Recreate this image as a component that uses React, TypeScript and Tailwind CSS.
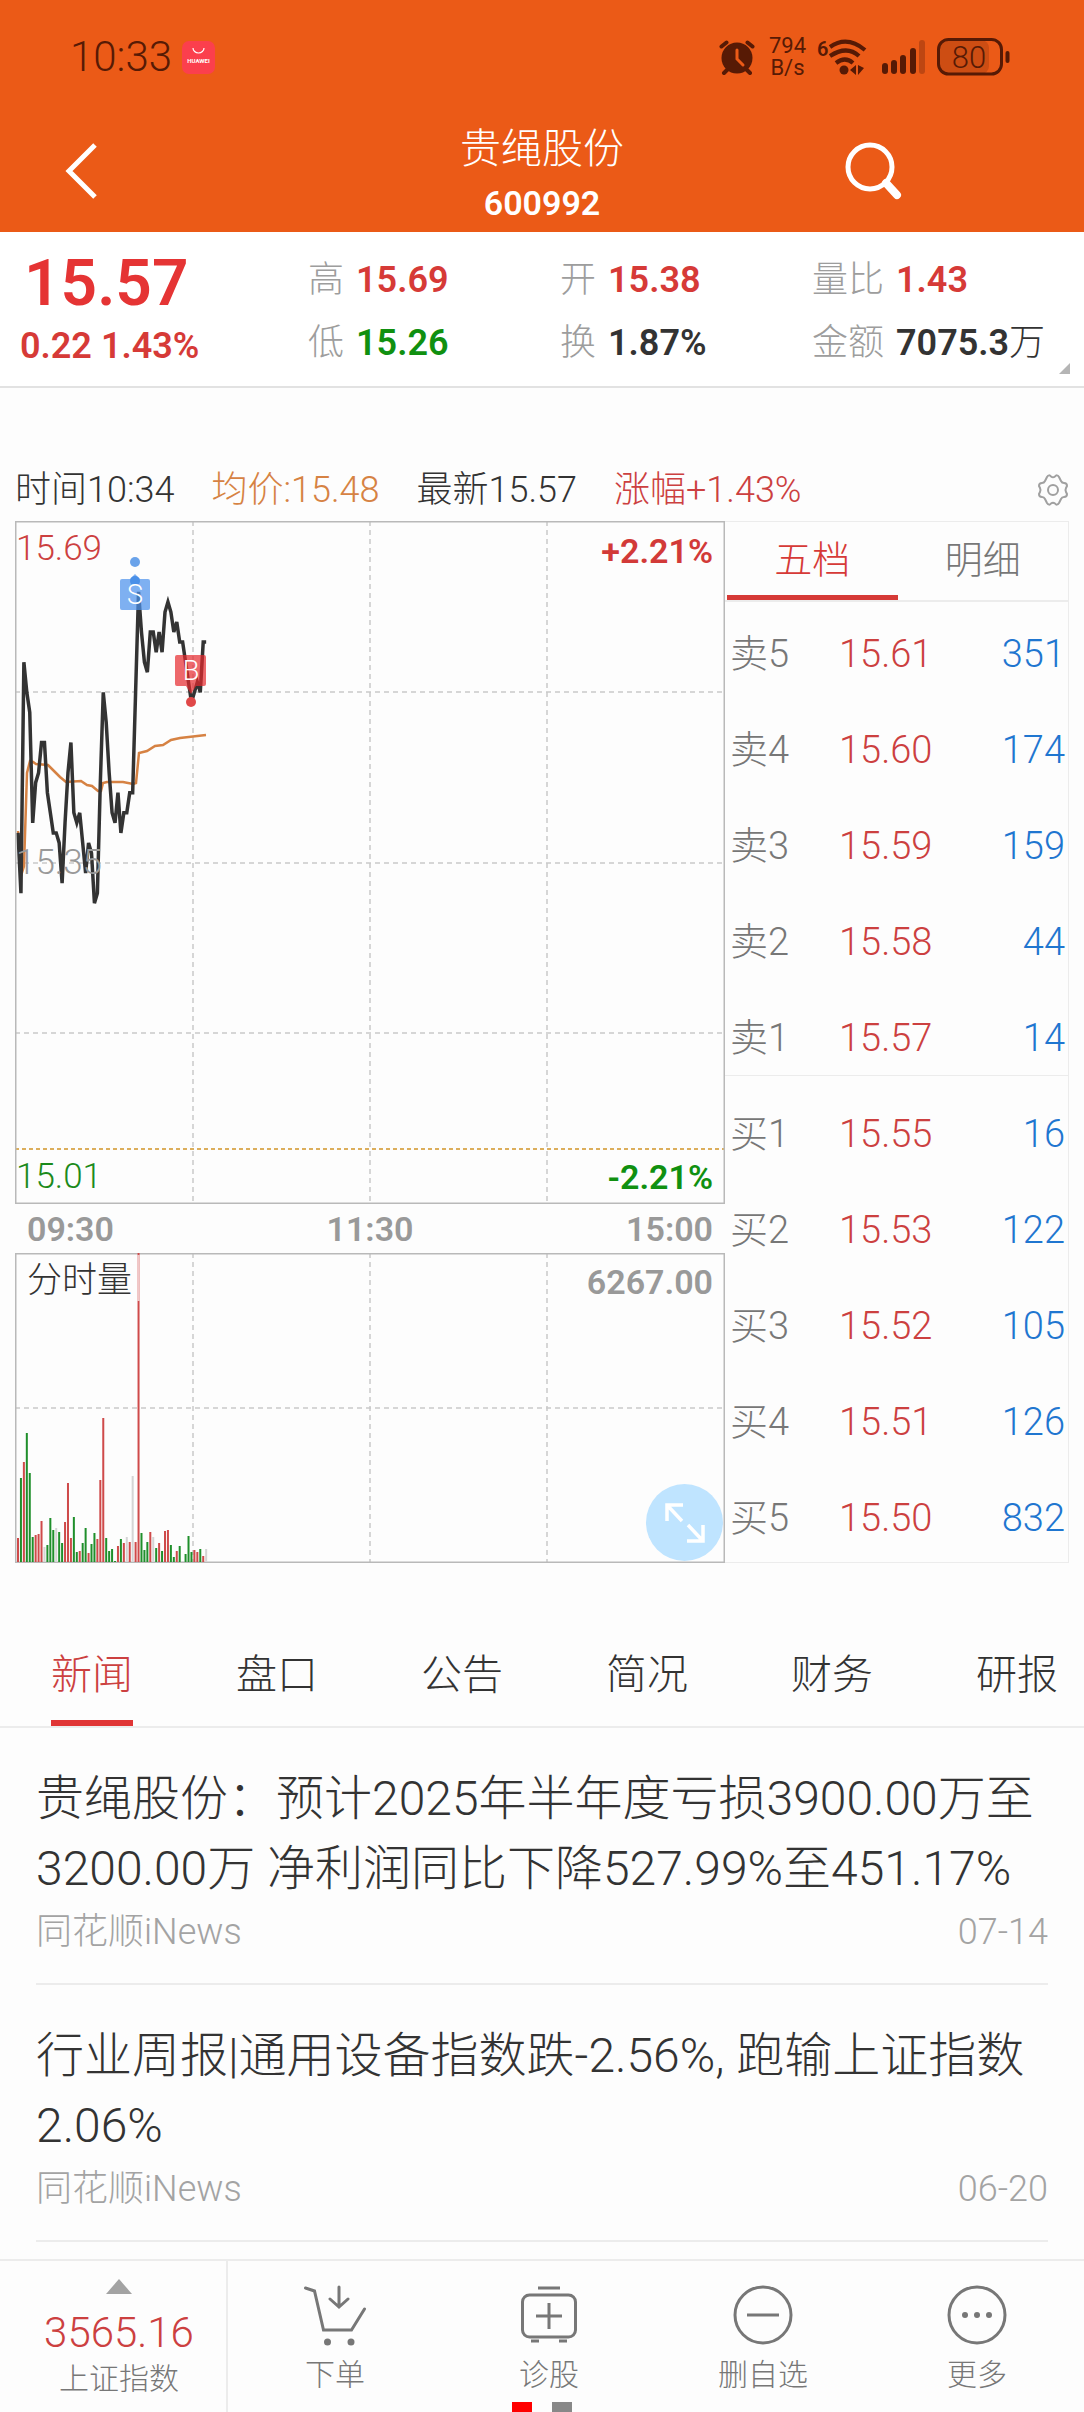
import { useState } from "react";

type Level = { name: string; price: string; volume: number };

const sellLevels: Level[] = [
  { name: "卖5", price: "15.61", volume: 351 },
  { name: "卖4", price: "15.60", volume: 174 },
  { name: "卖3", price: "15.59", volume: 159 },
  { name: "卖2", price: "15.58", volume: 44 },
  { name: "卖1", price: "15.57", volume: 14 },
];

const buyLevels: Level[] = [
  { name: "买1", price: "15.55", volume: 16 },
  { name: "买2", price: "15.53", volume: 122 },
  { name: "买3", price: "15.52", volume: 105 },
  { name: "买4", price: "15.51", volume: 126 },
  { name: "买5", price: "15.50", volume: 832 },
];

const newsTabs = ["新闻", "盘口", "公告", "简况", "财务", "研报"];

const news = [
  {
    title: "贵绳股份：预计2025年半年度亏损3900.00万至3200.00万 净利润同比下降527.99%至451.17%",
    source: "同花顺iNews",
    date: "07-14",
  },
  {
    title: "行业周报|通用设备指数跌-2.56%, 跑输上证指数2.06%",
    source: "同花顺iNews",
    date: "06-20",
  },
];

// One entry per minute from 09:30, in cents above 15.00
const prices = [
  38, 32, 55, 52, 50, 39, 43, 44, 47, 47, 42, 40, 38, 38, 37, 33, 39, 44, 47, 40, 39, 40, 37, 34, 37, 36,
  31, 32, 43, 52, 49, 44, 40, 39, 42, 38, 40, 40, 42, 42, 52, 62, 58, 55, 54, 58, 58, 56, 58, 56, 60, 61,
  60, 58, 59, 57, 57, 55, 53, 51, 52, 53, 52, 57, 57,
];

// r = up, g = down, n = unchanged
const volumes =
  "24r 84g 100r 129g 89g 25g 27r 28r 41r 15n 17g 44g 32g 34n 30g 19g 40r 79r 24r 45g 10g 11r 19g 34g 9r 18g 29g 23r 82r 144r 24g 11g 13g 1g 16r 23g 19r 25n 20r 86n 20r 309r 29g 12g 20g 30r 25n 14g 19r 11g 31r 32r 17g 5g 11r 16g 1n 8g 26g 10g 12r 10r 13g 6r 13n".split(
    " "
  );

const barColors: Record<string, string> = { r: "#cf4a4a", g: "#1f8f2b", n: "#d4d4d4" };

const minuteX = (i: number) => 3 + i * 2.94;
const priceY = (cents: number) => 342 - (cents - 35) * 10.04;

function StatusBar() {
  return (
    <div className="flex h-[114px] items-center justify-between pl-[70px] pr-[73px] text-[#571a05]">
      <div className="flex items-center gap-2.5">
        <span className="text-[42px] leading-none">10:33</span>
        <svg width="33" height="33" viewBox="0 0 33 33" aria-hidden="true">
          <rect width="33" height="33" rx="7" fill="#fb3f4d" />
          <path d="M11 7a5.500 5 0 0 0 11 0" fill="none" stroke="#fff" strokeWidth="1.200" />
          <text x="16.500" y="22" fill="#fff" fontSize="6" fontWeight="700" textAnchor="middle">
            HUAWEI
          </text>
        </svg>
      </div>
      <div className="flex items-center">
        <svg width="36" height="35" viewBox="0 0 36 35" fill="none" stroke="currentColor" strokeLinecap="round" aria-hidden="true">
          <path d="M2.500 6.500l5-4M33.500 6.500l-5-4M9 29l-4 4M27 29l4 4" strokeWidth="4" />
          <circle cx="18" cy="18" r="15.500" fill="currentColor" stroke="none" />
          <path d="M18 10v9l6 6" stroke="#eb5a17" strokeWidth="3" />
        </svg>
        <div className="ml-3.5 text-center text-[22px] font-normal leading-[22px]">
          <div>794</div>
          <div>B/s</div>
        </div>
        <svg className="ml-2.5" width="52" height="38" viewBox="0 0 52 38" fill="none" stroke="currentColor" aria-hidden="true">
          <text x="1" y="18" fill="currentColor" stroke="none" fontSize="20" fontWeight="600">
            6
          </text>
          <path d="M14 9Q31-3 49 12M14 18q17-11 29 0M20 25q9-7 17 0" strokeWidth="4.200" />
          <circle cx="28" cy="32" r="4.500" fill="currentColor" stroke="none" />
          <path d="M40 27v10l-6-5zM42 27v10l6-7z" fill="currentColor" stroke="none" />
        </svg>
        <svg className="ml-3.5" width="43" height="34" viewBox="0 0 43 34" fill="currentColor" aria-hidden="true">
          <rect x="0" y="23" width="6" height="11" rx="3" />
          <rect x="9" y="20" width="6" height="14" rx="3" />
          <rect x="18" y="15" width="6" height="19" rx="3" />
          <rect x="28" y="8" width="6" height="26" rx="3" />
          <rect x="37" y="0" width="6" height="34" rx="3" opacity=".3" />
        </svg>
        <svg className="ml-3" width="74" height="38" viewBox="0 0 74 38" aria-hidden="true">
          <rect x="2" y="2" width="50" height="34" rx="8" fill="currentColor" opacity=".2" />
          <rect x="1.500" y="1.500" width="63" height="34.500" rx="10" fill="none" stroke="currentColor" strokeWidth="3" />
          <path d="M70.500 15v8" stroke="currentColor" strokeWidth="4" strokeLinecap="round" />
          <text x="32" y="30" fill="currentColor" fontSize="31" textAnchor="middle">
            80
          </text>
        </svg>
      </div>
    </div>
  );
}

function Header() {
  return (
    <header className="bg-[#eb5a17]">
      <StatusBar />
      <div className="grid h-[118px] grid-cols-[1fr_auto_1fr] items-center pb-1 text-white">
        <button type="button" aria-label="返回" className="ml-16 w-9">
          <svg width="34" height="56" viewBox="0 0 34 56" fill="none" stroke="currentColor" strokeWidth="5">
            <path d="M31 2L5 28l26 26" />
          </svg>
        </button>
        <div className="pt-1 text-center">
          <h1 className="text-[41px] leading-[60px]">贵绳股份</h1>
          <p className="text-[34px] font-semibold leading-[48px]">600992</p>
        </div>
        <button type="button" aria-label="搜索" className="mr-[181px] justify-self-end">
          <svg width="58" height="58" viewBox="0 0 58 58" fill="none" stroke="currentColor">
            <circle cx="25" cy="25" r="22" strokeWidth="5" />
            <path d="M41 41l11 12" strokeWidth="8" strokeLinecap="round" />
          </svg>
        </button>
      </div>
    </header>
  );
}

function Stat({ label, value, color }: { label: string; value: string; color: string }) {
  return (
    <div className="flex gap-3">
      <dt className="text-[#9d9d9d]">{label}</dt>
      <dd className={`font-semibold ${color}`}>{value}</dd>
    </div>
  );
}

function Quote() {
  return (
    <section className="relative flex h-[156px] border-b-2 border-[#e2e2e2] bg-white text-[36px]">
      <div className="w-[308px] pt-4 font-semibold text-[#d63a37]">
        <p className="pl-6 text-[64px] leading-[72px] text-[#e53434]">15.57</p>
        <p className="pl-5 leading-[52px]">0.22 1.43%</p>
      </div>
      <dl className="grid flex-1 grid-cols-[252px_252px_1fr] content-start pt-[17px] leading-[63px]">
        <Stat label="高" value="15.69" color="text-[#d63a37]" />
        <Stat label="开" value="15.38" color="text-[#d63a37]" />
        <Stat label="量比" value="1.43" color="text-[#d63a37]" />
        <Stat label="低" value="15.26" color="text-[#109010]" />
        <Stat label="换" value="1.87%" color="text-[#333333]" />
        <div className="flex gap-3">
          <dt className="text-[#9d9d9d]">金额</dt>
          <dd className="font-semibold text-[#333333]">
            7075.3<span className="font-light">万</span>
          </dd>
        </div>
      </dl>
      <svg className="absolute bottom-3 right-3.5" width="11" height="11" viewBox="0 0 11 11" aria-hidden="true">
        <path d="M11 0v11H0z" fill="#b5b5b5" />
      </svg>
    </section>
  );
}

function PriceChart() {
  const line = prices.map((p, i) => `${minuteX(i)},${priceY(p)}`).join(" ");
  return (
    <div className="relative h-[683px]">
      <svg className="block h-full w-full" viewBox="0 0 710 683" preserveAspectRatio="none" fill="none">
        <g stroke="#c9c9c9" strokeWidth="1.500" strokeDasharray="5 4">
          <path d="M0 171H710M0 342H710M0 512H710M178 0V683M355 0V683M532 0V683" />
        </g>
        <path d="M0 628H710" stroke="#dcae5c" strokeWidth="2" strokeDasharray="4 3" />
        <path
          d="M3 310L6 355 9 345 12 252 15 240 18 241 21 243 33 244 39 250 45 256 51 261 66 260 72 264 77 265 83 270 86 270 88 262 92 261 108 261 118 263 121 262 124 232 132 230 140 225 148 224 156 219 165 217 191 214"
          stroke="#d68243"
          strokeWidth="2.500"
        />
        <polyline points={line} stroke="#333" strokeWidth="3.500" />
        <rect x=".75" y=".75" width="708.500" height="681.500" stroke="#b9b9b9" strokeWidth="1.500" />
        {/* sell marker */}
        <circle cx="120" cy="41" r="5" fill="#6aa3ea" />
        <path d="M107 58h8l5-5 5 5h8a2 2 0 0 1 2 2v27a2 2 0 0 1-2 2h-26a2 2 0 0 1-2-2V60a2 2 0 0 1 2-2z" fill="#4c92ec" opacity=".72" />
        <circle cx="120" cy="60" r="5" fill="#4a90e8" />
        <text x="120" y="83" fill="#fff" fontSize="27" textAnchor="middle">
          S
        </text>
        {/* buy marker */}
        <path d="M162 134h27a2 2 0 0 1 2 2v27a2 2 0 0 1-2 2h-8l-5 8-5-8h-9a2 2 0 0 1-2-2v-27a2 2 0 0 1 2-2z" fill="#e5282c" opacity=".7" />
        <circle cx="176" cy="181" r="5" fill="#e04848" />
        <text x="176" y="159" fill="#fff" fontSize="27" textAnchor="middle">
          B
        </text>
      </svg>
      <span className="absolute left-px top-2 text-[35px] leading-10 text-[#cc4040]">15.69</span>
      <span className="absolute right-3 top-2.5 text-[34px] font-semibold leading-10 text-[#d23a38]">+2.21%</span>
      <span className="absolute left-px top-[322px] text-[35px] leading-10 text-[#999999]">15.35</span>
      <span className="absolute bottom-[7px] left-px text-[35px] leading-10 text-[#1b8a1b]">15.01</span>
      <span className="absolute bottom-[7px] right-3 text-[34px] font-semibold leading-10 text-[#109010]">-2.21%</span>
    </div>
  );
}

function VolumeChart() {
  return (
    <div className="relative h-[310px]">
      <svg className="block h-full w-full" viewBox="0 0 710 310" preserveAspectRatio="none" fill="none">
        <path
          d="M0 155H710M178 0V310M355 0V310M532 0V310"
          stroke="#c9c9c9"
          strokeWidth="1.500"
          strokeDasharray="5 4"
        />
        <rect x=".75" y=".75" width="708.500" height="308.500" stroke="#b9b9b9" strokeWidth="1.500" />
        {volumes.map((v, i) => {
          const h = parseInt(v);
          return <rect key={i} x={minuteX(i) - 1} y={309 - h} width="2" height={h} fill={barColors[v.slice(-1)]} />;
        })}
        <path d="M123.500 2V48" stroke="#fdfdfd" strokeWidth="2" opacity=".7" />
      </svg>
      <span className="absolute left-3 top-1.5 text-[35px] leading-[44px] text-[#333333]">分时量</span>
      <span className="absolute right-3 top-[9px] text-[34px] font-semibold leading-10 text-[#999999]">6267.00</span>
      <button
        type="button"
        aria-label="全屏"
        className="absolute bottom-0.5 right-0.5 flex h-[77px] w-[77px] items-center justify-center rounded-full bg-[#bfe4ff] text-white"
      >
        <svg width="40" height="40" viewBox="0 0 40 40" fill="none" stroke="currentColor" strokeWidth="3.500">
          <path d="M18 2H2v16M2 2l15 16M22 38h16V22M38 38L23 22" />
        </svg>
      </button>
    </div>
  );
}

function OrderBook() {
  const [tab, setTab] = useState("五档");
  return (
    <div className="w-[344px] border border-l-0 border-[#ececec] text-[38px]">
      <div className="grid h-20 grid-cols-2 border-b-2 border-[#ececec] pl-0.5">
        {["五档", "明细"].map((name) => (
          <button
            key={name}
            type="button"
            onClick={() => setTab(name)}
            className={
              tab === name
                ? "border-b-[5px] border-[#d63a37] pt-1 text-[#d63a37]"
                : "border-b-[5px] border-transparent pt-1 text-[#777777]"
            }
          >
            {name}
          </button>
        ))}
      </div>
      <table className="w-full leading-[48px]">
        <tbody>
          {[...sellLevels, ...buyLevels].map((row) => (
            <tr
              key={row.name}
              className={
                row.name === "卖5"
                  ? "h-[89px] align-bottom"
                  : row.name === "卖1"
                    ? "h-24 border-b border-[#ececec] align-bottom"
                    : "h-24 align-bottom"
              }
            >
              <th className="w-[114px] pb-[13px] pl-[5px] text-left font-light text-[#777777]">{row.name}</th>
              <td className="pb-[13px] text-[#cc4040]">{row.price}</td>
              <td className="pb-[13px] pr-[3px] text-right text-[#1f76d0]">{row.volume}</td>
            </tr>
          ))}
        </tbody>
      </table>
    </div>
  );
}

function Market() {
  return (
    <section className="px-[15px] pt-[78px]">
      <div className="flex h-[55px] items-start justify-between text-[36px] leading-[48px]">
        <div className="flex gap-[37px] text-[#333333]">
          <span>时间10:34</span>
          <span className="text-[#d68243]">均价:15.48</span>
          <span>最新15.57</span>
          <span className="text-[#cc4040]">涨幅+1.43%</span>
        </div>
        <button type="button" aria-label="设置" className="mt-2">
          <svg width="32" height="32" viewBox="0 0 32 32" fill="none" stroke="#a0a0a0" strokeWidth="2">
            <path
              d="M10 3q2-3 4-.5 2 1.500 4 0 2-2.500 4 .5l2 4q1 2 3 2 3 0 3 3l-1 2q-1 2 0 4l1 2q0 3-3 3-2 0-3 2l-2 4q-2 3-4 .5-2-1.500-4 0-2 2.500-4-.5l-2-4q-1-2-3-2-3 0-3-3l1-2q1-2 0-4l-1-2q0-3 3-3 2 0 3-2z"
              strokeLinejoin="round"
            />
            <circle cx="16" cy="16" r="5" />
          </svg>
        </button>
      </div>
      <div className="flex">
        <div className="min-w-0 flex-1">
          <PriceChart />
          <div className="flex h-[49px] items-center justify-between px-3 pt-0.5 text-[34px] font-semibold text-[#999999]">
            <span>09:30</span>
            <span>11:30</span>
            <span>15:00</span>
          </div>
          <VolumeChart />
        </div>
        <OrderBook />
      </div>
    </section>
  );
}

function NewsSection() {
  const [tab, setTab] = useState("新闻");
  return (
    <section className="pt-[61px]">
      <div className="flex justify-between border-b-2 border-[#ececec] pl-[51px] pr-[26px] text-[41px]">
        {newsTabs.map((name) => (
          <button
            key={name}
            type="button"
            onClick={() => setTab(name)}
            className={
              tab === name
                ? "h-[102px] border-b-[6px] border-[#e03535] pt-2 text-[#cc4040]"
                : "h-[102px] border-b-[6px] border-transparent pt-2 text-[#333333]"
            }
          >
            {name}
          </button>
        ))}
      </div>
      <ul className="px-9">
        {news.map((item) => (
          <li key={item.date} className="border-b-2 border-[#ececec] pb-[23px] pt-9">
            <a href="#" className="block">
              <h2 className="text-[48px] leading-[70px] text-[#333333]">{item.title}</h2>
              <p className="flex justify-between text-[36px] leading-[56px] text-[#a3a3a3]">
                <span>{item.source}</span>
                <time>{item.date}</time>
              </p>
            </a>
          </li>
        ))}
      </ul>
    </section>
  );
}

function BottomBar() {
  return (
    <footer className="relative mt-[17px] flex h-[153px] border-t-2 border-[#ececec] text-[30px] text-[#777777]">
      <button type="button" className="flex w-[228px] flex-col items-center border-r-2 border-[#ececec] pl-3 pt-[18px]">
        <svg width="26" height="15" viewBox="0 0 26 15" aria-hidden="true">
          <path d="M13 0l13 15H0z" fill="#a3a3a3" />
        </svg>
        <span className="mt-3.5 text-[42px] leading-[50px] text-[#cc4040]">3565.16</span>
        <span className="leading-[42px]">上证指数</span>
      </button>
      <nav className="grid flex-1 grid-cols-4">
        <button type="button" className="flex flex-col items-center pt-6">
          <svg width="62" height="62" viewBox="0 0 62 62" fill="none" stroke="currentColor" strokeWidth="3" strokeLinecap="round">
            <path d="M1.500 3l9 3 9 39h28l13-21M35 2v19M26 14l9 8 9-8" />
            <circle cx="23.500" cy="57" r="3.500" fill="currentColor" stroke="none" />
            <circle cx="47" cy="57" r="3.500" fill="currentColor" stroke="none" />
          </svg>
          <span className="mt-2 leading-10">下单</span>
        </button>
        <button type="button" className="flex flex-col items-center pt-6">
          <svg width="62" height="62" viewBox="0 0 62 62" fill="none" stroke="currentColor" strokeWidth="3">
            <path d="M20 3h22M13 56h8M41 56h8M31 18v26M18 31h26" />
            <rect x="4.500" y="10" width="53" height="42" rx="7" />
          </svg>
          <span className="mt-2 leading-10">诊股</span>
        </button>
        <button type="button" className="flex flex-col items-center pt-6">
          <svg width="62" height="62" viewBox="0 0 62 62" fill="none" stroke="currentColor" strokeWidth="3">
            <circle cx="31" cy="30" r="28" />
            <path d="M15 30h32" />
          </svg>
          <span className="mt-2 leading-10">删自选</span>
        </button>
        <button type="button" className="flex flex-col items-center pt-6">
          <svg width="62" height="62" viewBox="0 0 62 62" fill="none" stroke="currentColor" strokeWidth="3">
            <circle cx="31" cy="30" r="28" />
            <g fill="currentColor" stroke="none">
              <circle cx="19" cy="30" r="3" />
              <circle cx="31" cy="30" r="3" />
              <circle cx="43" cy="30" r="3" />
            </g>
          </svg>
          <span className="mt-2 leading-10">更多</span>
        </button>
      </nav>
      {/* page indicator */}
      <div className="absolute inset-x-0 bottom-0 flex justify-center gap-5">
        <span className="h-2.5 w-5 bg-[#ff0000]" />
        <span className="h-2.5 w-5 bg-[#888888]" />
      </div>
    </footer>
  );
}

export default function App() {
  return (
    <div className="min-h-screen bg-[#fdfdfd] font-['Roboto','Noto_Sans_CJK_SC',sans-serif] font-light">
      <Header />
      <Quote />
      <Market />
      <NewsSection />
      <BottomBar />
    </div>
  );
}
